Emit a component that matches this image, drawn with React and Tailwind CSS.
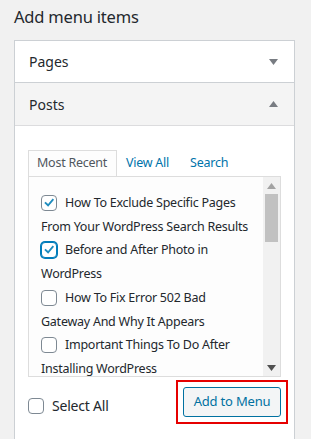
import React, { useState } from 'react';

const posts = [
  { id: 1, first: 'How To Exclude Specific Pages', rest: 'From Your WordPress Search Results', checked: true },
  { id: 2, first: 'Before and After Photo in', rest: 'WordPress', checked: true, focus: true },
  { id: 3, first: 'How To Fix Error 502 Bad', rest: 'Gateway And Why It Appears', checked: false },
  { id: 4, first: 'Important Things To Do After', rest: 'Installing WordPress', checked: false },
];

const Check = ({ checked, focus, onClick }) => (
  <span
    onClick={onClick}
    className={
      'inline-flex items-center justify-center w-4 h-4 rounded-[4px] bg-white align-[-4px] cursor-pointer shrink-0 ' +
      (focus ? 'border border-[#007cba] shadow-[0_0_0_1px_#007cba]' : 'border border-[#7e8993]')
    }
  >
    {checked && (
      <svg width="17" height="17" viewBox="0 0 20 20" className="-mt-px">
        <path d="M15.2 4.4 8.7 12.1 5.2 8.8 3.3 10.7 8.8 15.9 17.2 6.2z" fill="#1e8cbe" />
      </svg>
    )}
  </span>
);

const Arrow = ({ up, color = '#787c82' }) => (
  <svg width="9" height="6" viewBox="0 0 9 6">
    <path d={up ? 'M0 6 4.5 0 9 6z' : 'M0 0h9L4.5 6z'} fill={color} />
  </svg>
);

const App = () => {
  const [items, setItems] = useState(posts);
  const [all, setAll] = useState(false);

  const toggle = (id) =>
    setItems((prev) => prev.map((p) => (p.id === id ? { ...p, checked: !p.checked } : p)));

  return (
    <div className="w-[311px] h-[439px] overflow-hidden bg-[#f1f1f1] text-[#23282d] font-['Noto_Sans',sans-serif]">
      <h2 className="pl-[14px] pt-[5px] h-[40px] text-[16.5px] leading-[24px] tracking-[-0.2px]">Add menu items</h2>

      <div className="mx-[14px] w-[281px] border border-[#ccd0d4] bg-white">
        <div className="flex items-center justify-between h-[42px] pl-[14px] pr-[16px] text-[14px] border-b border-[#ccd0d4]">
          <span>Pages</span>
          <Arrow />
        </div>
        <div className="flex items-center justify-between h-[43px] pl-[14px] pr-[16px] text-[14px] bg-[#f4f4f4] border-b border-[#dcdcde]">
          <span>Posts</span>
          <Arrow up />
        </div>

        <div className="px-[13px] pt-[24px] pb-[18px] text-[12.5px] tracking-[-0.25px]">
          <div className="flex">
            <div className="relative z-10 -mb-px h-[26px] pl-[8px] pr-[9px] flex items-center border border-b-0 border-[#dddddd] bg-[#fdfdfd] text-[#50575e]">
              Most Recent
            </div>
            <div className="h-[26px] pl-[9px] flex items-center text-[#0073aa]">View All</div>
            <div className="h-[26px] pl-[21px] flex items-center text-[#0073aa]">Search</div>
          </div>

          <div className="flex h-[201px] border border-[#dddddd] bg-[#fdfdfd]">
            <ul className="flex-1 overflow-hidden pl-[12px] pt-[14px] leading-[23.7px] whitespace-nowrap">
              {items.map((p) => (
                <li key={p.id}>
                  <Check checked={p.checked} focus={p.focus} onClick={() => toggle(p.id)} />
                  <span className="ml-[8px]">{p.first}</span>
                  <br />
                  <span>{p.rest}</span>
                </li>
              ))}
            </ul>
            <div className="w-[17px] flex flex-col items-center bg-[#f1f1f1]">
              <div className="h-[17px] flex items-center justify-center">
                <Arrow up color="#a3a3a3" />
              </div>
              <div className="w-[13px] h-[48px] bg-[#c1c1c1]" />
              <div className="flex-1" />
              <div className="h-[17px] flex items-center justify-center">
                <Arrow color="#505050" />
              </div>
            </div>
          </div>

          <div className="flex items-center justify-between mt-[3px] -mr-[7px]">
            <label className="flex items-center gap-[8px] mt-[7px]">
              <Check checked={all} onClick={() => setAll(!all)} />
              <span className="text-[14px] tracking-[-0.2px]">Select All</span>
            </label>
            <div className="border-2 border-[#e60000] p-[5px]">
              <button className="block h-[30px] w-[98px] rounded-[3px] border border-[#0071a1] bg-[#f3f5f6] text-[#0071a1] text-[13px] tracking-[-0.2px]">
                Add to Menu
              </button>
            </div>
          </div>
        </div>

        <div className="border-t border-[#ccd0d4] h-[10px]" />
      </div>
    </div>
  );
};

export default App;
